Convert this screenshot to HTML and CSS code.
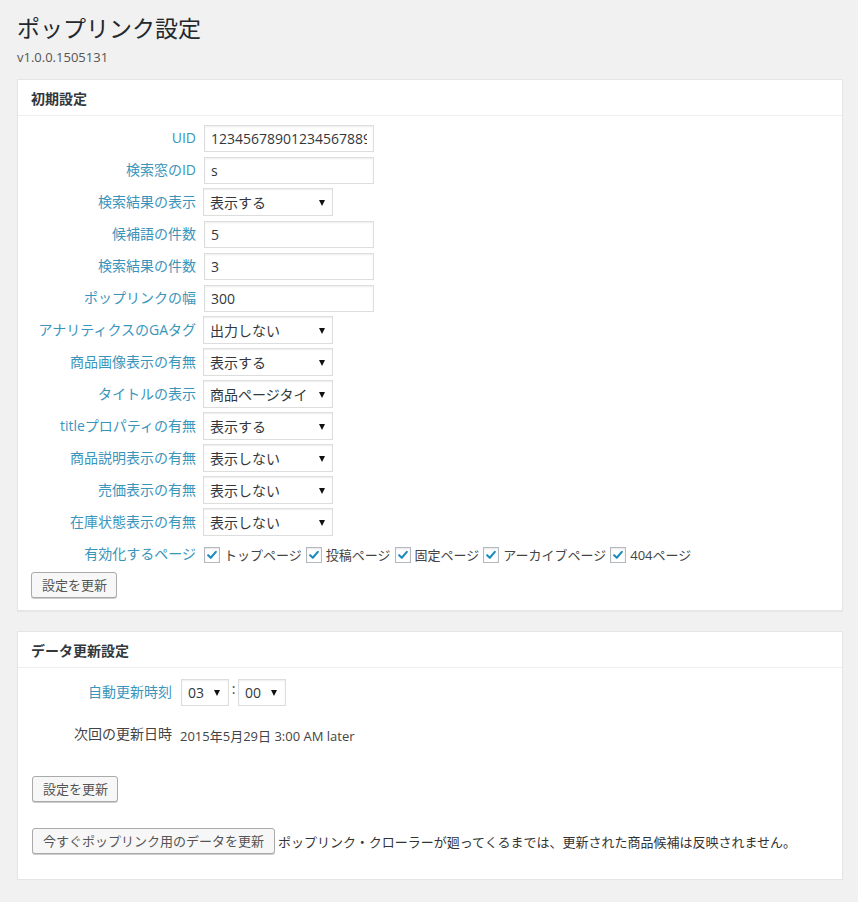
FILE: index.html
```html
<!DOCTYPE html>
<html lang="ja">
<head>
<meta charset="utf-8">
<title>ポップリンク設定</title>
<link rel="stylesheet" href="styles.css">
</head>
<body>
<div class="wrap">
  <h1 class="page-title">ポップリンク設定</h1>
  <p class="version">v1.0.0.1505131</p>

  <div class="postbox">
    <h2 class="hndle">初期設定</h2>
    <div class="inside">
      <div class="form">
        <label class="lbl">UID</label>
        <div class="field"><input class="text" type="text" value="12345678901234567889"></div>

        <label class="lbl">検索窓のID</label>
        <div class="field"><input class="text" type="text" value="s"></div>

        <label class="lbl">検索結果の表示</label>
        <div class="field"><span class="sel"><select><option>表示する</option></select></span></div>

        <label class="lbl">候補語の件数</label>
        <div class="field"><input class="text" type="text" value="5"></div>

        <label class="lbl">検索結果の件数</label>
        <div class="field"><input class="text" type="text" value="3"></div>

        <label class="lbl">ポップリンクの幅</label>
        <div class="field"><input class="text" type="text" value="300"></div>

        <label class="lbl">アナリティクスのGAタグ</label>
        <div class="field"><span class="sel"><select><option>出力しない</option></select></span></div>

        <label class="lbl">商品画像表示の有無</label>
        <div class="field"><span class="sel"><select><option>表示する</option></select></span></div>

        <label class="lbl">タイトルの表示</label>
        <div class="field"><span class="sel"><select><option>商品ページタイ</option></select></span></div>

        <label class="lbl">titleプロパティの有無</label>
        <div class="field"><span class="sel"><select><option>表示する</option></select></span></div>

        <label class="lbl">商品説明表示の有無</label>
        <div class="field"><span class="sel"><select><option>表示しない</option></select></span></div>

        <label class="lbl">売価表示の有無</label>
        <div class="field"><span class="sel"><select><option>表示しない</option></select></span></div>

        <label class="lbl">在庫状態表示の有無</label>
        <div class="field"><span class="sel"><select><option>表示しない</option></select></span></div>

        <label class="lbl">有効化するページ</label>
        <div class="field checks">
          <span class="cb"><svg viewBox="0 0 16 16" width="16" height="16"><path d="M3.6 8.2 L6.6 11.2 L12.4 4.4" fill="none" stroke="#1e8cbe" stroke-width="2.4" stroke-linecap="round" stroke-linejoin="round"/></svg></span><span class="cbl">トップページ</span>
          <span class="cb"><svg viewBox="0 0 16 16" width="16" height="16"><path d="M3.6 8.2 L6.6 11.2 L12.4 4.4" fill="none" stroke="#1e8cbe" stroke-width="2.4" stroke-linecap="round" stroke-linejoin="round"/></svg></span><span class="cbl">投稿ページ</span>
          <span class="cb"><svg viewBox="0 0 16 16" width="16" height="16"><path d="M3.6 8.2 L6.6 11.2 L12.4 4.4" fill="none" stroke="#1e8cbe" stroke-width="2.4" stroke-linecap="round" stroke-linejoin="round"/></svg></span><span class="cbl">固定ページ</span>
          <span class="cb"><svg viewBox="0 0 16 16" width="16" height="16"><path d="M3.6 8.2 L6.6 11.2 L12.4 4.4" fill="none" stroke="#1e8cbe" stroke-width="2.4" stroke-linecap="round" stroke-linejoin="round"/></svg></span><span class="cbl">アーカイブページ</span>
          <span class="cb"><svg viewBox="0 0 16 16" width="16" height="16"><path d="M3.6 8.2 L6.6 11.2 L12.4 4.4" fill="none" stroke="#1e8cbe" stroke-width="2.4" stroke-linecap="round" stroke-linejoin="round"/></svg></span><span class="cbl">404ページ</span>
        </div>
      </div>
      <div class="btn-row first"><button class="button">設定を更新</button></div>
    </div>
  </div>

  <div class="postbox second">
    <h2 class="hndle">データ更新設定</h2>
    <div class="inside inside2">
      <div class="form2">
        <label class="lbl">自動更新時刻</label>
        <div class="field time">
          <span class="sel small"><select><option>03</option></select></span>
          <span class="colon">:</span>
          <span class="sel small"><select><option>00</option></select></span>
        </div>
        <span class="lbl dark">次回の更新日時</span>
        <span class="next">2015年5月29日 3:00 AM later</span>
      </div>
      <div class="btn-row b2"><button class="button">設定を更新</button></div>
      <div class="btn-row b3"><button class="button">今すぐポップリンク用のデータを更新</button><span class="note">ポップリンク・クローラーが廻ってくるまでは、更新された商品候補は反映されません。</span></div>
    </div>
  </div>
</div>
</body>
</html>
```

FILE: styles.css
```css
html, body {
  margin: 0;
  padding: 0;
  background: #f1f1f1;
}
body {
  font-family: "Open Sans", "Noto Sans CJK JP", sans-serif;
  color: #444;
  font-size: 13px;
}
.wrap {
  padding: 0 15px 0 17px;
}
.page-title {
  margin: 0;
  padding-top: 13px;
  font-size: 23px;
  line-height: 30px;
  font-weight: 400;
  color: #23282d;
}
.version {
  margin: 6px 0 0;
  font-size: 13px;
  line-height: 16px;
  color: #555;
}
.postbox {
  margin-top: 14px;
  background: #fff;
  border: 1px solid #e5e5e5;
  box-shadow: 0 1px 1px rgba(0,0,0,0.04);
}
.postbox.second {
  margin-top: 20px;
}
.hndle {
  margin: 0;
  height: 35px;
  padding: 0 13px;
  font-size: 14px;
  line-height: 37px;
  font-weight: 700;
  color: #32373c;
  border-bottom: 1px solid #eee;
}
.inside {
  padding: 6px 0 12px 0;
}
.form {
  display: grid;
  grid-template-columns: 178px 1fr;
  column-gap: 8px;
  grid-auto-rows: 32px;
  align-items: center;
}
.lbl {
  text-align: right;
  font-size: 14px;
  line-height: 20px;
  color: #3a95bb;
  white-space: nowrap;
}
.lbl.dark {
  color: #444;
}
.field {
  display: flex;
  align-items: center;
}
.text {
  box-sizing: border-box;
  width: 170px;
  height: 27px;
  margin: 0;
  padding: 0 6px;
  border: 1px solid #ddd;
  box-shadow: inset 0 1px 2px rgba(0,0,0,0.07);
  font-family: "Open Sans", "Noto Sans CJK JP", sans-serif;
  font-size: 14px;
  color: #32373c;
  background: #fff;
  outline: none;
}
.sel {
  position: relative;
  display: inline-block;
  box-sizing: border-box;
  width: 130px;
  height: 28px;
  margin-left: -1px;
  border: 1px solid #ddd;
  box-shadow: inset 0 1px 2px rgba(0,0,0,0.07);
  background: #fff;
}
.sel select {
  -webkit-appearance: none;
  appearance: none;
  width: 100%;
  height: 100%;
  border: 0;
  margin: 0;
  padding: 0 18px 0 6px;
  background: transparent;
  font-family: "Open Sans", "Noto Sans CJK JP", sans-serif;
  font-size: 14px;
  color: #32373c;
  outline: none;
}
.sel::after {
  content: "";
  position: absolute;
  right: 7px;
  top: 11px;
  border-left: 3.5px solid transparent;
  border-right: 3.5px solid transparent;
  border-top: 6px solid #111;
  pointer-events: none;
}
.checks {
  font-size: 13px;
  color: #444;
  white-space: nowrap;
  padding-top: 2px;
}
.cb {
  box-sizing: border-box;
  width: 16px;
  height: 16px;
  border: 1px solid #b4b9be;
  box-shadow: inset 0 1px 2px rgba(0,0,0,0.1);
  display: inline-flex;
  align-items: center;
  justify-content: center;
  background: #fff;
}
.cb svg {
  display: block;
  width: 14px;
  height: 14px;
}
.cbl {
  margin: 0 4px 0 4px;
  line-height: 18px;
}
.btn-row {
  display: flex;
  align-items: center;
  padding-left: 13px;
}
.btn-row.first {
  margin-top: 2px;
}
.button {
  box-sizing: border-box;
  height: 26px;
  padding: 0 10px;
  margin: 0;
  border: 1px solid #aaa;
  border-radius: 3px;
  background: #f7f7f7;
  box-shadow: 0 1px 0 #ccc;
  font-family: "Open Sans", "Noto Sans CJK JP", sans-serif;
  font-size: 13px;
  line-height: 24px;
  color: #555;
  white-space: nowrap;
}
.first .button {
  width: 86px;
}
.inside2 {
  padding: 10px 0 25px 0;
}
.form2 {
  display: grid;
  grid-template-columns: 154px auto;
  column-gap: 8px;
  grid-template-rows: 28px 56px;
  align-items: center;
  justify-items: start;
}
.form2 .lbl {
  justify-self: end;
}
.form2 .sel.small {
  width: 48px;
  height: 27px;
  margin-left: 0;
}
.form2 .sel.small::after {
  right: 8px;
  top: 10px;
}
.time {
  margin-left: 1px;
}
.colon {
  width: 9px;
  text-align: center;
  font-size: 14px;
  color: #444;
  line-height: 20px;
  margin-top: -6px;
}
.next {
  font-size: 13px;
  color: #444;
  padding-top: 2px;
}
.b2 {
  margin-top: 14px;
  padding-left: 14px;
}
.b2 .button {
  width: 86px;
}
.b3 {
  margin-top: 26px;
  padding-left: 14px;
}
.b3 .button {
  width: 243px;
  padding: 0;
}
.note {
  margin-left: 3px;
  font-size: 13px;
  color: #333;
}
```
